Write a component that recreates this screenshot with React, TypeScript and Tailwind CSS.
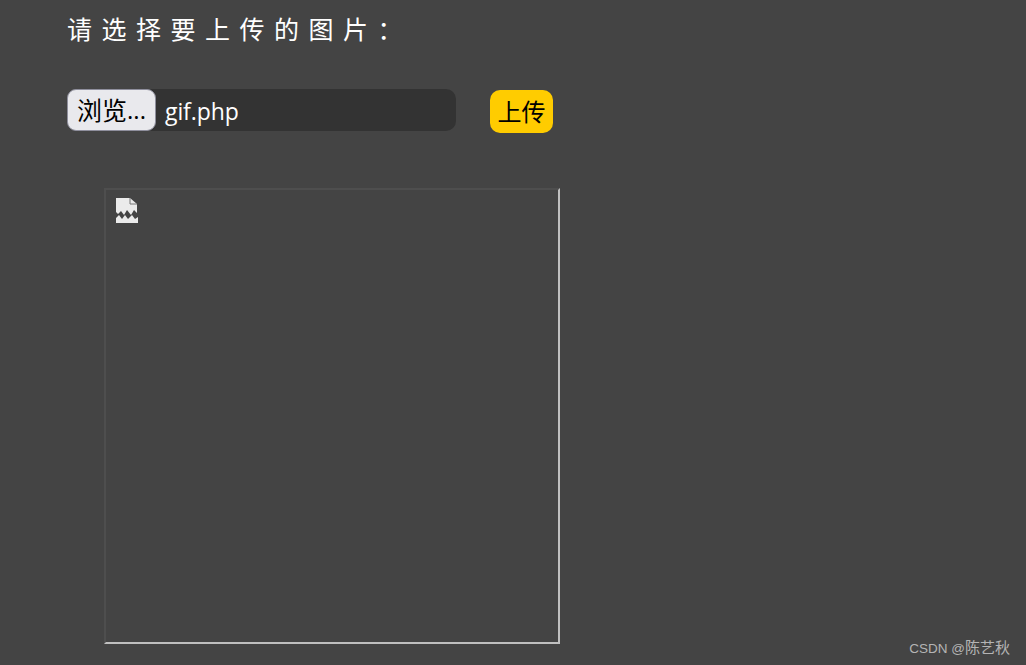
export default function App() {
  const font = { fontFamily: '"Open Sans", "Noto Sans CJK SC", sans-serif' };
  return (
    <div className="relative h-[665px] w-[1026px] overflow-hidden bg-[#444444] pl-[67px] pt-[12px] text-white" style={font}>
      <div className="h-[36px] text-[25px] leading-[36px] tracking-[9.5px] whitespace-nowrap font-['Liberation_Sans','Noto_Sans_CJK_SC',sans-serif]">请选择要上传的图片：</div>
      <div className="mt-[41px] flex items-start">
        <div className="flex h-[42px] w-[389px] items-center rounded-[10px] bg-[#333333]">
          <div className="flex h-[42px] w-[89px] items-center justify-center rounded-[9px] border border-[#8f8f9d] bg-[#e9e9ed] text-black whitespace-nowrap">
            <span className="text-[25px] leading-[30px]">浏览</span>
            <span className="text-[24px] leading-[30px]">...</span>
          </div>
          <span className="ml-[9px] mt-[2px] text-[23px] leading-[30px] tracking-[-0.1px] text-white">gif.php</span>
        </div>
        <div className="ml-[34px] mt-[1px] flex h-[43px] w-[63px] items-center justify-center rounded-[10px] bg-[#ffcc00] text-[24px] text-black">上传</div>
      </div>
      <div className="ml-[37px] mt-[55px] h-[456px] w-[456px] border-2 border-t-[#4e4e4e] border-l-[#4e4e4e] border-r-[#c0c0c0] border-b-[#c0c0c0] pl-[9px] pt-[7px]">
        <svg width="24" height="27" viewBox="0 0 24 27" className="block">
          <path d="M1 1H15L22 7V16L19 13L16 18L12 13L9 18L6 14L3 17L1 15Z" fill="#ebebeb" />
          <path d="M15 1V7H22" fill="none" stroke="#777" strokeWidth="1" />
          <path d="M1 21L4 18L7 22L10 18L13 22L17 18L20 22L23 20V26H1Z" fill="#ebebeb" />
        </svg>
      </div>
      <div className="absolute right-[16px] top-[639px] text-[13.5px] leading-[18px] text-[#b4b4b4] font-['Liberation_Sans','Noto_Sans_CJK_SC',sans-serif] whitespace-nowrap">CSDN @<span className="text-[15px]">陈艺秋</span></div>
    </div>
  );
}
